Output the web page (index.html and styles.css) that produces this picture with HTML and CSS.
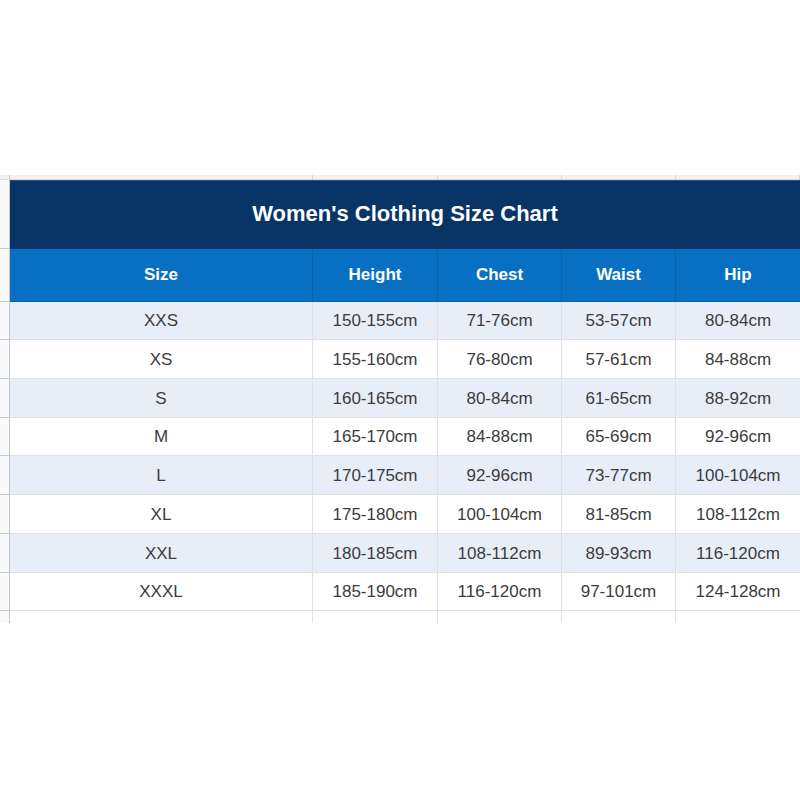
FILE: index.html
```html
<!DOCTYPE html>
<html>
<head>
<meta charset="utf-8">
<link rel="stylesheet" href="styles.css">
</head>
<body>
<div class="sheet">
  <div class="gut strip"></div><div class="c strip"></div><div class="c strip"></div><div class="c strip"></div><div class="c strip"></div><div class="c strip last"></div>

  <div class="gut title-g"></div><div class="title">Women's Clothing Size Chart</div>

  <div class="gut head-g"></div>
  <div class="h">Size</div><div class="h">Height</div><div class="h">Chest</div><div class="h">Waist</div><div class="h last">Hip</div>

  <div class="gut r38"></div><div class="d alt r38">XXS</div><div class="d alt r38">150-155cm</div><div class="d alt r38">71-76cm</div><div class="d alt r38">53-57cm</div><div class="d alt r38 last">80-84cm</div>
  <div class="gut r39"></div><div class="d r39">XS</div><div class="d r39">155-160cm</div><div class="d r39">76-80cm</div><div class="d r39">57-61cm</div><div class="d r39 last">84-88cm</div>
  <div class="gut r39"></div><div class="d alt r39">S</div><div class="d alt r39">160-165cm</div><div class="d alt r39">80-84cm</div><div class="d alt r39">61-65cm</div><div class="d alt r39 last">88-92cm</div>
  <div class="gut r38"></div><div class="d r38">M</div><div class="d r38">165-170cm</div><div class="d r38">84-88cm</div><div class="d r38">65-69cm</div><div class="d r38 last">92-96cm</div>
  <div class="gut r39"></div><div class="d alt r39">L</div><div class="d alt r39">170-175cm</div><div class="d alt r39">92-96cm</div><div class="d alt r39">73-77cm</div><div class="d alt r39 last">100-104cm</div>
  <div class="gut r39"></div><div class="d r39">XL</div><div class="d r39">175-180cm</div><div class="d r39">100-104cm</div><div class="d r39">81-85cm</div><div class="d r39 last">108-112cm</div>
  <div class="gut r39"></div><div class="d alt r39">XXL</div><div class="d alt r39">180-185cm</div><div class="d alt r39">108-112cm</div><div class="d alt r39">89-93cm</div><div class="d alt r39 last">116-120cm</div>
  <div class="gut r38"></div><div class="d r38">XXXL</div><div class="d r38">185-190cm</div><div class="d r38">116-120cm</div><div class="d r38">97-101cm</div><div class="d r38 last">124-128cm</div>

  <div class="gut tail"></div><div class="c tail"></div><div class="c tail"></div><div class="c tail"></div><div class="c tail"></div><div class="c tail last"></div>
</div>
</body>
</html>
```
FILE: styles.css
```css
html, body {
  margin: 0;
  padding: 0;
  background: #ffffff;
}
body {
  font-family: "Liberation Sans", Arial, sans-serif;
  width: 800px;
  height: 800px;
  overflow: hidden;
}
.sheet {
  margin-top: 175px;
  display: grid;
  grid-template-columns: 10px 303px 125px 124px 114px 124px;
  grid-template-rows: 5px 69px 53px 38px 39px 39px 38px 39px 39px 39px 38px 12px;
}
.sheet > div {
  box-sizing: border-box;
}
.gut {
  background: #f8f9fa;
  border-right: 1px solid #c7c7c7;
  border-bottom: 1px solid #c7c7c7;
}
.strip {
  background: #f1f1f1;
  border-bottom: 1px solid #dcdcdc;
}
.c {
  border-right: 1px solid #e0e0e0;
}
.c.strip {
  border-right: 1px solid #d6d6d6;
}
.title-g, .head-g {
  border-bottom: 1px solid #c7c7c7;
}
.title {
  grid-column: 2 / 7;
  background: #083566;
  color: #ffffff;
  font-weight: bold;
  font-size: 22px;
  display: flex;
  align-items: center;
  justify-content: center;
  padding-bottom: 2px;
  border-top: 1px solid #2c4f7a;
}
.h {
  background: #0870c2;
  color: #ffffff;
  font-weight: bold;
  font-size: 17px;
  display: flex;
  align-items: center;
  justify-content: center;
  border-right: 1px solid #0a63aa;
  border-bottom: 1px solid #0a63aa;
  padding-bottom: 0;
}
.d {
  background: #ffffff;
  color: #3c3c3c;
  font-size: 17px;
  display: flex;
  align-items: center;
  justify-content: center;
  border-right: 1px solid #e0e0e0;
  border-bottom: 1px solid #e0e0e0;
  padding-top: 1px;
}
.d.alt {
  background: #e8eef8;
}
.tail {
  background: #ffffff;
}
.gut.tail {
  background: #f8f9fa;
  border-bottom: none;
}
.last {
  border-right: none;
}
```
